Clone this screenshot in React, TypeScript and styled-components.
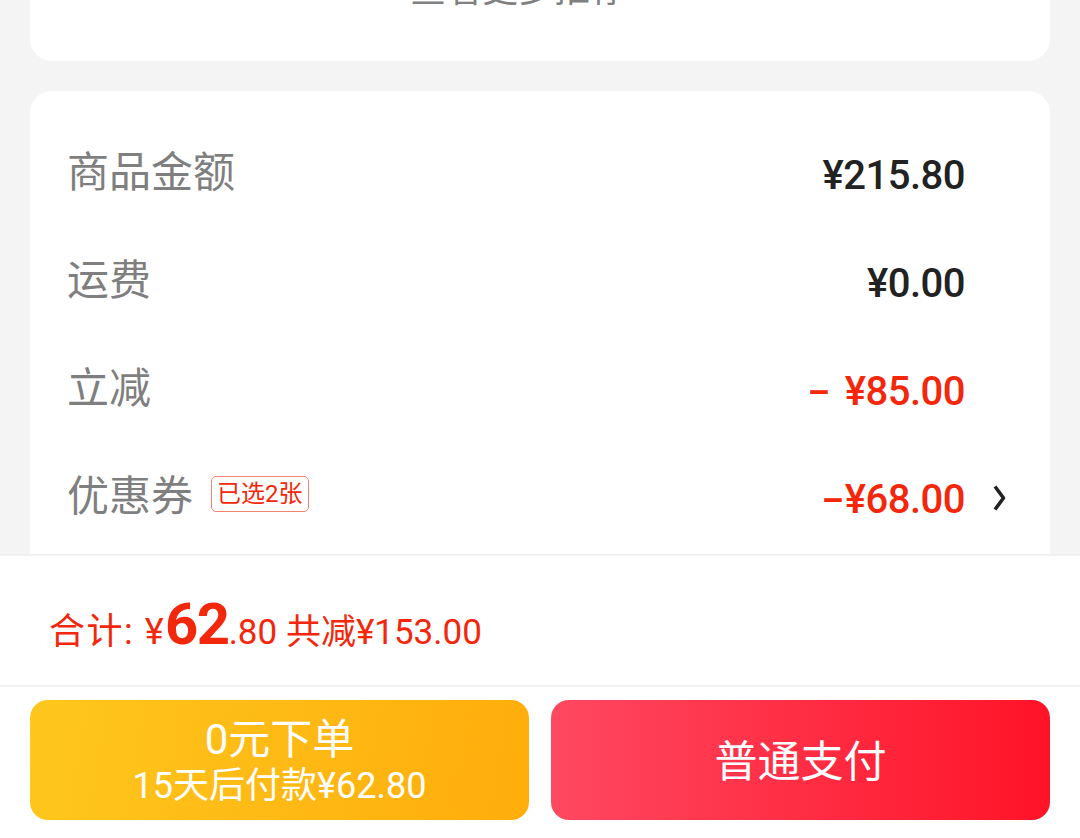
import { FC } from 'react';
import styled, { createGlobalStyle } from 'styled-components';

const GlobalStyle = createGlobalStyle`
    * {
        box-sizing: border-box;
    }

    html,
    body {
        margin: 0;
        padding: 0;
        background: #f4f4f4;
        font-family: Roboto, 'Noto Sans CJK SC', sans-serif;
    }
`;

const RED = '#f2270c';

const Page = styled.div`
    display: flex;
    flex-direction: column;
    width: 1080px;
    height: 838px;
    overflow: hidden;
    background: #f4f4f4;
`;

const ScrollArea = styled.div`
    flex: 1;
    display: flex;
    flex-direction: column;
    gap: 30px;
    padding: 0 30px;
    overflow: hidden;
`;

const Card = styled.section`
    background: #fff;
    border-radius: 22px;
    flex-shrink: 0;
`;

const RecommendCard = styled(Card)`
    margin-top: -30px;
    padding: 0 44px 51px 0;
    text-align: center;
`;

const MoreLink = styled.span`
    font-size: 36px;
    line-height: 40px;
    color: #808080;
`;

const DetailCard = styled(Card)`
    padding: 27px 44px 40px 37px;
`;

const Row = styled.div`
    display: flex;
    align-items: center;
    height: 108px;
`;

const Label = styled.span`
    margin-bottom: 8px;
    font-size: 42px;
    color: #7f7f7f;
`;

const Tag = styled.span`
    margin: 0 0 4px 18px;
    padding: 0 5px;
    height: 36px;
    line-height: 34px;
    border: 1px solid #f4806e;
    border-radius: 5px;
    font-size: 24px;
    color: ${RED};
`;

const Value = styled.span<{ $red?: boolean }>`
    margin-left: auto;
    margin-top: 6px;
    font-size: 40px;
    font-weight: 500;
    letter-spacing: -0.5px;
    white-space: pre;
    color: ${({ $red }) => ($red ? RED : '#222')};
`;

const Sign = styled.span<{ $gap: number }>`
    display: inline-block;
    transform: scaleX(1.7);
    margin-right: ${({ $gap }) => $gap}px;
`;

const ArrowSlot = styled.span`
    display: flex;
    justify-content: flex-end;
    width: 41px;
    margin-top: 4px;
`;

const BottomBar = styled.footer`
    flex-shrink: 0;
    background: #fff;
    border-top: 2px solid #f0f0f0;
`;

const Summary = styled.div`
    display: flex;
    align-items: baseline;
    height: 131px;
    padding: 39px 0 0 49px;
    color: ${RED};
    border-bottom: 2px solid #f2f2f2;
`;

const SumText = styled.span<{ $size: number; $bold?: boolean; $spacing?: number }>`
    font-size: ${({ $size }) => $size}px;
    font-weight: ${({ $bold }) => ($bold ? 700 : 400)};
    letter-spacing: ${({ $spacing = 0 }) => $spacing}px;
    line-height: 1;
    white-space: pre;
`;

const Buttons = styled.div`
    display: grid;
    grid-template-columns: 1fr 1fr;
    gap: 22px;
    padding: 13px 30px 18px;
`;

const PayButton = styled.button<{ $variant: 'later' | 'now' }>`
    display: flex;
    flex-direction: column;
    align-items: center;
    justify-content: center;
    height: 120px;
    padding: 4px 0 0;
    border: none;
    border-radius: 18px;
    color: #fff;
    font-family: Roboto, 'Noto Sans CJK SC', sans-serif;
    background: ${({ $variant }) =>
        $variant === 'later'
            ? 'linear-gradient(100deg, #fec71e 0%, #ffad0b 100%)'
            : 'linear-gradient(90deg, #ff4861 0%, #ff1327 100%)'};
`;

const ButtonTitle = styled.span<{ $size: number }>`
    font-size: ${({ $size }) => $size}px;
    line-height: 48px;
`;

const ButtonSub = styled.span`
    font-size: 36px;
    line-height: 44px;
`;

const Chevron: FC = () => (
    <svg width='14' height='28' viewBox='0 0 14 28'>
        <path d='M3 2.5 L11.5 14 L3 25.5' fill='none' stroke='#222' strokeWidth='3.6' strokeLinejoin='round' />
    </svg>
);

interface RowData {
    label: string;
    amount: string;
    sign?: string;
    signGap?: number;
    red?: boolean;
    tag?: string;
    arrow?: boolean;
}

const rows: RowData[] = [
    { label: '商品金额', amount: '¥215.80' },
    { label: '运费', amount: '¥0.00' },
    { label: '立减', amount: '¥85.00', sign: '-', signGap: 20, red: true },
    { label: '优惠券', amount: '¥68.00', sign: '-', signGap: 6, red: true, tag: '已选2张', arrow: true },
];

const App: FC = () => (
    <>
        <GlobalStyle />
        <Page>
            <ScrollArea>
                <RecommendCard>
                    <MoreLink>查看更多推荐</MoreLink>
                </RecommendCard>
                <DetailCard>
                    {rows.map((row) => (
                        <Row key={row.label}>
                            <Label>{row.label}</Label>
                            {row.tag && <Tag>{row.tag}</Tag>}
                            <Value $red={row.red}>
                                {row.sign && <Sign $gap={row.signGap ?? 0}>{row.sign}</Sign>}
                                {row.amount}
                            </Value>
                            <ArrowSlot>{row.arrow && <Chevron />}</ArrowSlot>
                        </Row>
                    ))}
                </DetailCard>
            </ScrollArea>
            <BottomBar>
                <Summary>
                    <SumText $size={36} $spacing={1.5}>
                        合计: ¥
                    </SumText>
                    <SumText $size={58} $bold $spacing={-1.5}>
                        62
                    </SumText>
                    <SumText $size={35}>.80 共减¥153.00</SumText>
                </Summary>
                <Buttons>
                    <PayButton $variant='later'>
                        <ButtonTitle $size={42}>0元下单</ButtonTitle>
                        <ButtonSub>15天后付款¥62.80</ButtonSub>
                    </PayButton>
                    <PayButton $variant='now'>
                        <ButtonTitle $size={43}>普通支付</ButtonTitle>
                    </PayButton>
                </Buttons>
            </BottomBar>
        </Page>
    </>
);

export default App;
